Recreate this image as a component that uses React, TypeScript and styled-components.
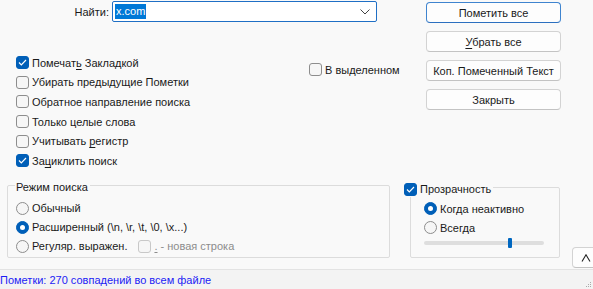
import React from "react";
import styled, { createGlobalStyle, css } from "styled-components";

const Global = createGlobalStyle`
  html, body { margin: 0; padding: 0; background: #f9f9f9; }
  body { font-family: "Liberation Sans", Arial, sans-serif; font-size: 11px; color: #1a1a1a; }
  * { box-sizing: border-box; }
`;

const Window = styled.div`
  width: 593px;
  height: 289px;
  display: flex;
  flex-direction: column;
  background: #f9f9f9;
  overflow: hidden;
`;

const Main = styled.div`
  flex: 1;
  display: flex;
  flex-direction: column;
`;

const TopSection = styled.div`
  display: flex;
  height: 180px;
`;

const LeftPane = styled.div`
  width: 426px;
  flex-shrink: 0;
  display: flex;
  flex-direction: column;
`;

const FindRow = styled.div`
  display: flex;
  align-items: center;
  height: 21px;
  margin-top: 1px;
`;

const FindLabel = styled.label`
  width: 109px;
  text-align: right;
  margin-right: 3px;
`;

const Combo = styled.div`
  width: 265px;
  height: 21px;
  border: 1px solid #1f6fc5;
  border-radius: 2px;
  background: #fff;
  display: flex;
  align-items: center;
  padding: 0 6px 0 2px;
`;

const Selected = styled.span`
  background: #0078d7;
  color: #fff;
  line-height: 15px;
  padding: 0 1px;
`;

const ComboArrow = styled.svg`
  margin-left: auto;
  width: 10px;
  height: 6px;
`;

const OptionsRow = styled.div`
  display: flex;
  margin-top: 31px;
  padding-left: 16px;
`;

const CheckList = styled.div`
  width: 293px;
  display: flex;
  flex-direction: column;
`;

const Row = styled.label<{ $h?: number; $disabled?: boolean }>`
  display: flex;
  align-items: center;
  height: ${(p) => p.$h ?? 19.6}px;
  white-space: nowrap;
  color: ${(p) => (p.$disabled ? "#8c8c8c" : "inherit")};
`;

const Text = styled.span<{ $muted?: boolean }>`
  white-space: pre;
  color: ${(p) => (p.$muted ? "#8c8c8c" : "inherit")};
`;

const Side = styled.div`
  margin-top: 7px;
`;

const Box = styled.span<{ $checked?: boolean; $disabled?: boolean }>`
  width: 13px;
  height: 13px;
  border-radius: 3px;
  margin-right: 3px;
  flex-shrink: 0;
  display: inline-flex;
  align-items: center;
  justify-content: center;
  ${(p) =>
    p.$checked
      ? css`
          background: #005fb8;
          border: 1px solid #005fb8;
        `
      : css`
          background: #f6f6f6;
          border: 1px solid ${p.$disabled ? "#c8c8c8" : "#8d8d8d"};
        `}
`;

const Radio = styled.span<{ $checked?: boolean }>`
  width: 13px;
  height: 13px;
  border-radius: 50%;
  margin-right: 3px;
  flex-shrink: 0;
  display: inline-flex;
  align-items: center;
  justify-content: center;
  ${(p) =>
    p.$checked
      ? css`
          background: #005fb8;
          border: 1px solid #005fb8;
          &::after {
            content: "";
            width: 5px;
            height: 5px;
            border-radius: 50%;
            background: #fff;
          }
        `
      : css`
          background: #f6f6f6;
          border: 1px solid #8d8d8d;
        `}
`;

const U = styled.span`
  text-decoration: underline;
  text-underline-offset: 2px;
`;

const ButtonCol = styled.div`
  display: flex;
  flex-direction: column;
  gap: 8px;
  padding-top: 2px;
`;

const Button = styled.button<{ $default?: boolean }>`
  width: 135px;
  height: 21px;
  font: inherit;
  color: #1a1a1a;
  background: #fdfdfd;
  border: 1px solid ${(p) => (p.$default ? "#3f84cf" : "#d3d3d3")};
  border-bottom-color: ${(p) => (p.$default ? "#2b6fbf" : "#c3c3c3")};
  border-radius: 4px;
  padding: 0;
  white-space: pre;
  display: flex;
  align-items: center;
  justify-content: center;
`;

const BottomSection = styled.div`
  display: flex;
  align-items: flex-start;
  padding: 5px 0 0 7px;
`;

const Group = styled.div<{ $w: number; $h: number; $mt?: number; $ml?: number }>`
  position: relative;
  flex-shrink: 0;
  width: ${(p) => p.$w}px;
  height: ${(p) => p.$h}px;
  margin-top: ${(p) => p.$mt ?? 0}px;
  margin-left: ${(p) => p.$ml ?? 0}px;
  border: 1px solid #dcdcdc;
  border-radius: 2px;
  display: flex;
  flex-direction: column;
`;

const Legend = styled.div<{ $left: number }>`
  position: absolute;
  top: -7px;
  left: ${(p) => p.$left}px;
  height: 16px;
  display: flex;
  align-items: center;
  padding: 0 2px 0 1px;
  background: #f9f9f9;
  white-space: nowrap;
`;

const GroupBody = styled.div<{ $pt: number; $pl: number }>`
  padding: ${(p) => p.$pt}px 0 0 ${(p) => p.$pl}px;
  display: flex;
  flex-direction: column;
`;

const Gap = styled.span`
  width: 11px;
`;

const Slider = styled.div`
  position: relative;
  width: 120px;
  height: 4px;
  margin-top: 4px;
  background: #dedede;
  border-radius: 2px;
`;

const Thumb = styled.span`
  position: absolute;
  top: -3px;
  width: 4px;
  height: 10px;
  background: #0067c0;
  border-radius: 1px;
`;

const CaretButton = styled.button`
  margin-top: 62px;
  margin-left: 12px;
  width: 24px;
  height: 21px;
  flex-shrink: 0;
  background: #fdfdfd;
  border: 1px solid #d3d3d3;
  border-bottom-color: #c3c3c3;
  border-radius: 4px;
  display: flex;
  align-items: center;
  justify-content: flex-start;
  padding: 0 0 0 8px;
`;

const StatusBar = styled.div`
  height: 20px;
  border-top: 1px solid #e3e3e3;
  background: #f3f3f3;
  color: #1c1cf5;
  display: flex;
  align-items: center;
  position: relative;
`;

const Grip = styled.svg`
  position: absolute;
  right: 1px;
  bottom: 1px;
`;

const Check = () => (
  <svg width="9" height="7" viewBox="0 0 9 7">
    <polyline points="1,3.5 3.3,5.8 8,1" fill="none" stroke="#fff" strokeWidth="1.2" />
  </svg>
);

const CheckBox = ({ checked, disabled, children }: { checked?: boolean; disabled?: boolean; children: React.ReactNode }) => (
  <Row $disabled={disabled}>
    <Box $checked={checked} $disabled={disabled}>{checked && <Check />}</Box>
    <Text>{children}</Text>
  </Row>
);

const RadioRow = ({ checked, children }: { checked?: boolean; children: React.ReactNode }) => (
  <Row $h={19}>
    <Radio $checked={checked} />
    <Text>{children}</Text>
  </Row>
);

export default function App() {
  const sliderValue = 0.7;
  return (
    <Window>
      <Global />
      <Main>
        <TopSection>
          <LeftPane>
            <FindRow>
              <FindLabel>Найти:</FindLabel>
              <Combo>
                <Selected>x.com</Selected>
                <ComboArrow viewBox="0 0 10 6">
                  <polyline points="0.5,0.5 5,5 9.5,0.5" fill="none" stroke="#444" strokeWidth="1" />
                </ComboArrow>
              </Combo>
            </FindRow>
            <OptionsRow>
              <CheckList>
                <CheckBox checked>Помечат<U>ь</U> Закладкой</CheckBox>
                <CheckBox>Убирать предыдущие Пометки</CheckBox>
                <CheckBox>Обратное направление поиска</CheckBox>
                <CheckBox>Только целые слова</CheckBox>
                <CheckBox>Учитывать <U>р</U>егистр</CheckBox>
                <CheckBox checked>За<U>ц</U>иклить поиск</CheckBox>
              </CheckList>
              <Side>
                <CheckBox>В выделенном</CheckBox>
              </Side>
            </OptionsRow>
          </LeftPane>
          <ButtonCol>
            <Button $default>Пометить все</Button>
            <Button><span><U>У</U>брать все</span></Button>
            <Button>Коп. Помеченный Текст</Button>
            <Button>Закрыть</Button>
          </ButtonCol>
        </TopSection>
        <BottomSection>
          <Group $w={383} $h={73}>
            <Legend $left={7}>Режим поиска</Legend>
            <GroupBody $pt={12.5} $pl={8}>
              <RadioRow>Обычный</RadioRow>
              <RadioRow checked>Расширенный (\n, \r, \t, \0, \x...)</RadioRow>
              <Row $h={19}>
                <Radio />
                <Text>Регуляр. выражен.</Text>
                <Gap />
                <Box $disabled />
                <Text $muted><U>.</U> - новая строка</Text>
              </Row>
            </GroupBody>
          </Group>
          <Group $w={150} $h={71} $mt={2} $ml={20}>
            <Legend $left={-8}>
              <Box $checked><Check /></Box>
              <Text>Прозрачность</Text>
            </Legend>
            <GroupBody $pt={11} $pl={13}>
              <RadioRow checked>Когда неактивно</RadioRow>
              <RadioRow>Всегда</RadioRow>
              <Slider>
                <Thumb style={{ left: `${sliderValue * 120}px` }} />
              </Slider>
            </GroupBody>
          </Group>
          <CaretButton>
            <svg width="10" height="8" viewBox="0 0 10 8">
              <polyline points="1,7.5 5,0.8 9,7.5" fill="none" stroke="#222" strokeWidth="1.1" />
            </svg>
          </CaretButton>
        </BottomSection>
      </Main>
      <StatusBar>
        <Text>Пометки: 270 совпадений во всем файле</Text>
        <Grip width="6" height="6" viewBox="0 0 6 6">
          <rect x="4" y="0" width="1" height="1" fill="#aaa" />
          <rect x="2" y="2" width="1" height="1" fill="#aaa" />
          <rect x="4" y="2" width="1" height="1" fill="#aaa" />
          <rect x="0" y="4" width="1" height="1" fill="#aaa" />
          <rect x="2" y="4" width="1" height="1" fill="#aaa" />
          <rect x="4" y="4" width="1" height="1" fill="#aaa" />
        </Grip>
      </StatusBar>
    </Window>
  );
}
